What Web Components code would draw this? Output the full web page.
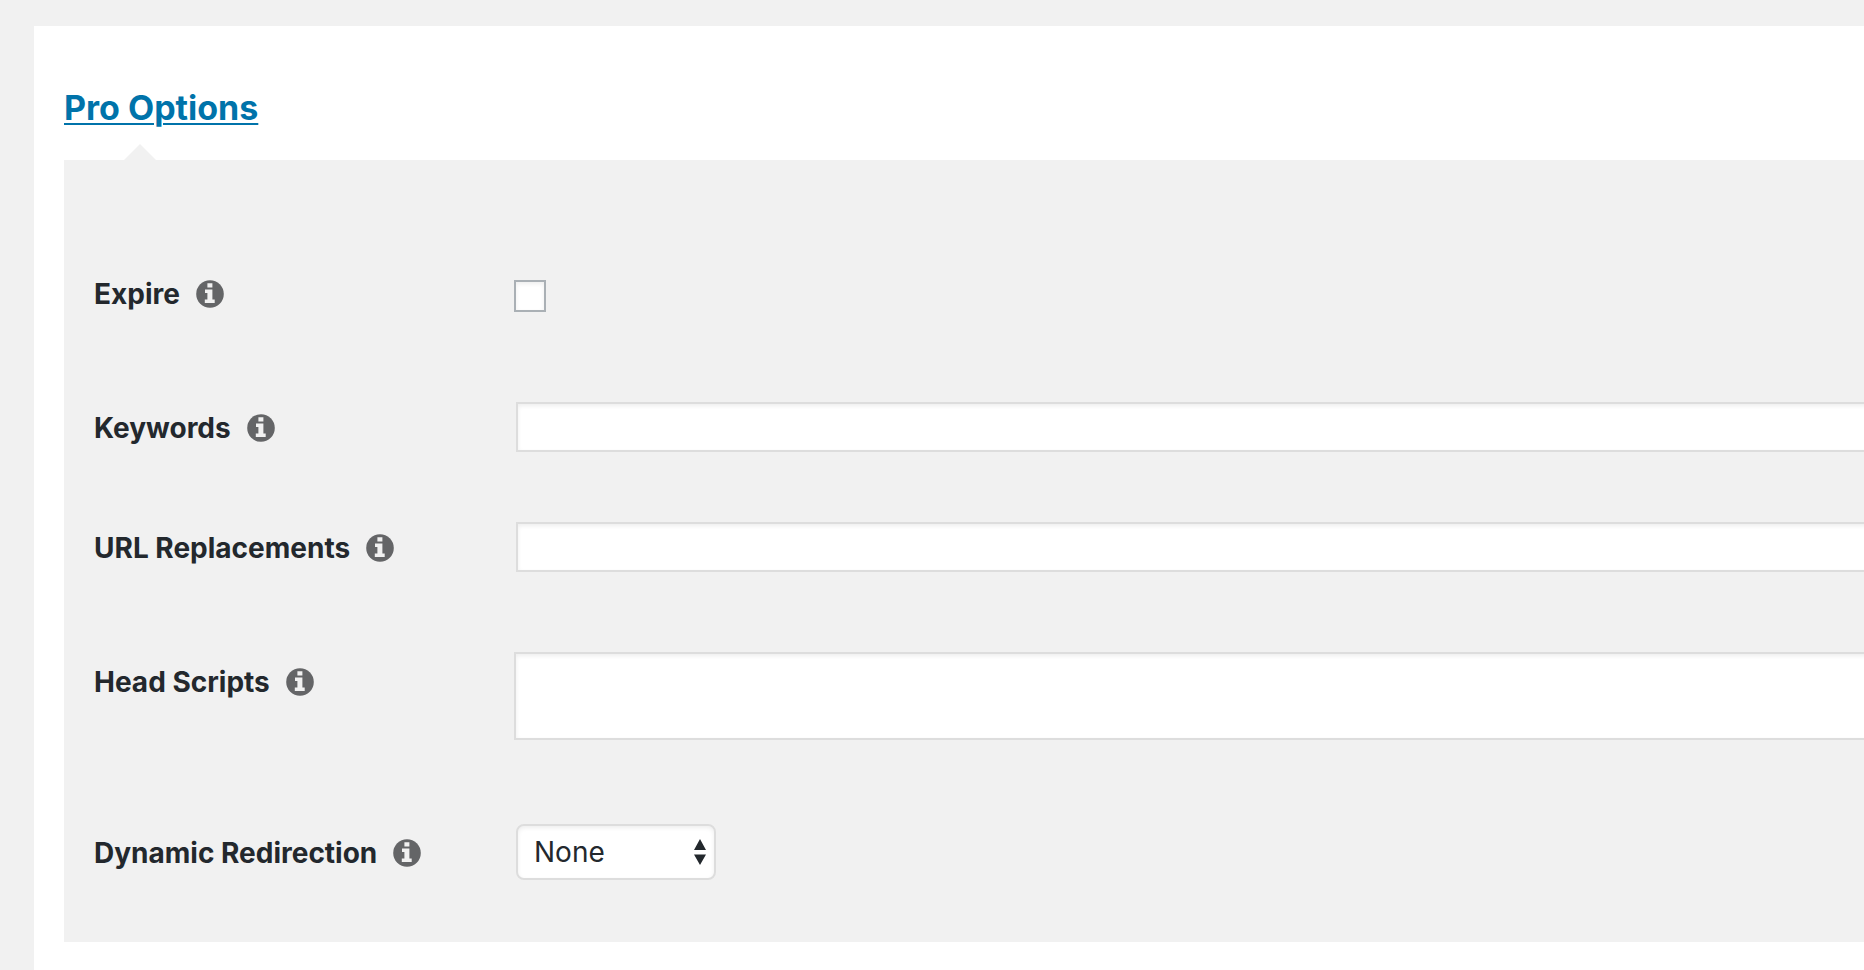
<!DOCTYPE html>
<html lang="en">
<head>
<meta charset="utf-8">
<meta name="viewport" content="width=device-width, initial-scale=1">
<title>Pro Options</title>
<style>
body { margin: 0; background: #f1f1f1; color: #23282d; font: 28px/40px Inter, "Liberation Sans", sans-serif; font-optical-sizing: none; }
</style>
</head>
<body>
<options-page>
  <options-section heading="Pro Options">
    <option-row kind="checkbox">Expire</option-row>
    <option-row kind="text">Keywords</option-row>
    <option-row kind="text">URL Replacements</option-row>
    <option-row kind="textarea">Head Scripts</option-row>
    <option-row kind="select" choices="None">Dynamic Redirection</option-row>
  </options-section>
</options-page>
<script>
class OptionsPage extends HTMLElement {
  constructor() {
    super();
    this.attachShadow({ mode: "open" }).innerHTML = `
      <style>
        :host { display: flex; box-sizing: border-box; min-height: 100vh; padding: 26px 0 0 34px; }
        main { flex: 1; min-width: 0; box-sizing: border-box; padding: 62px 0 28px 30px; background: #fff; }
      </style>
      <main><slot></slot></main>`;
  }
}

class OptionsSection extends HTMLElement {
  constructor() {
    super();
    this.attachShadow({ mode: "open" }).innerHTML = `
      <style>
        :host { display: block; }
        h2 { margin: 0 0 16px; font-size: 34px; line-height: 40px; font-weight: 650; }
        a { color: #0073aa; text-decoration: underline; text-decoration-thickness: 2px; text-underline-offset: 3px; }
        .pointer { display: block; width: 32px; height: 16px; margin-left: 60px; fill: #f1f1f1; }
        section { padding: 74px 0 22px 30px; background: #f1f1f1; }
      </style>
      <h2><a href="#options"></a></h2>
      <svg class="pointer" viewBox="0 0 32 16" aria-hidden="true"><path d="M0 16 16 0l16 16z"/></svg>
      <section id="options"><slot></slot></section>`;
  }
  connectedCallback() {
    this.shadowRoot.querySelector("a").textContent = this.getAttribute("heading");
  }
}

class InfoTip extends HTMLElement {
  constructor() {
    super();
    this.attachShadow({ mode: "open" }).innerHTML = `
      <style>
        :host { display: block; width: 28px; height: 28px; }
        svg { display: block; }
      </style>
      <svg width="28" height="28" viewBox="0 0 28 28" aria-hidden="true">
        <circle cx="14" cy="14" r="13.8" fill="#646567"/>
        <path fill="#f1f1f1" d="M11.4 3.2h5v4.2h-5zM9 9.4h7.4v10h2.3v3.7H8.8v-3.7h2.6v-6.3H9z"/>
      </svg>`;
  }
}

const controls = {
  checkbox: `<input id="field" type="checkbox">`,
  text: `<input id="field" type="text">`,
  textarea: `<textarea id="field"></textarea>`,
  select: `<div class="picker"><select id="field"></select>
    <svg width="14" height="26" viewBox="0 0 14 26" aria-hidden="true">
      <path fill="#23282d" d="M7 0l6 11H1zM1 15.500h12L7 26z"/>
    </svg></div>`
};

class OptionRow extends HTMLElement {
  constructor() {
    super();
    this.attachShadow({ mode: "open" });
  }
  connectedCallback() {
    const kind = this.getAttribute("kind");
    this.shadowRoot.innerHTML = `
      <style>
        :host { display: grid; grid-template-columns: 420px minmax(0, 1fr); align-items: center; padding: 35px 0; overflow-x: clip; }
        :host([kind="checkbox"]) { padding: 40px 0 51px; }
        :host([kind="textarea"]) { padding: 45px 0 42px; align-items: start; }
        :host([kind="select"]) { padding: 42px 0 40px; }
        :host([kind="select"]), :host([kind="text"]) { grid-template-columns: 422px minmax(0, 1fr); }
        .name { display: flex; align-items: center; gap: 16px; padding-top: 2px; }
        :host([kind="checkbox"]) .name { padding: 0 0 2px; }
        :host([kind="textarea"]) .name { padding-top: 10px; }
        label { font-weight: 650; white-space: nowrap; }
        input, textarea, select { box-sizing: border-box; display: block; margin: 0; font: inherit; color: inherit;
          background: #fff; border: 2px solid #ddd; border-radius: 0; box-shadow: inset 0 2px 4px rgba(0,0,0,.07); }
        /* the long fields run on past the right edge of the window */
        input[type="text"], textarea { width: calc(100% + 12px); padding: 4px 10px; outline: none; resize: none; }
        input[type="text"] { height: 50px; }
        textarea { height: 88px; }
        input[type="checkbox"] { appearance: none; width: 32px; height: 32px; margin-top: 2px; border-color: #aab0b5; }
        .picker { display: grid; width: 200px; align-items: center; }
        select { grid-area: 1 / 1; appearance: none; width: 100%; height: 56px; padding: 0 40px 0 16px; border-radius: 8px; }
        svg { grid-area: 1 / 1; justify-self: end; margin-right: 9px; pointer-events: none; }
      </style>
      <div class="name"><label for="field"><slot></slot></label><info-tip></info-tip></div>
      ${controls[kind]}`;
    if (kind === "select") {
      const select = this.shadowRoot.querySelector("select");
      for (const choice of this.getAttribute("choices").split(",")) select.add(new Option(choice));
    }
  }
}

customElements.define("options-page", OptionsPage);
customElements.define("options-section", OptionsSection);
customElements.define("info-tip", InfoTip);
customElements.define("option-row", OptionRow);
</script>
</body>
</html>
